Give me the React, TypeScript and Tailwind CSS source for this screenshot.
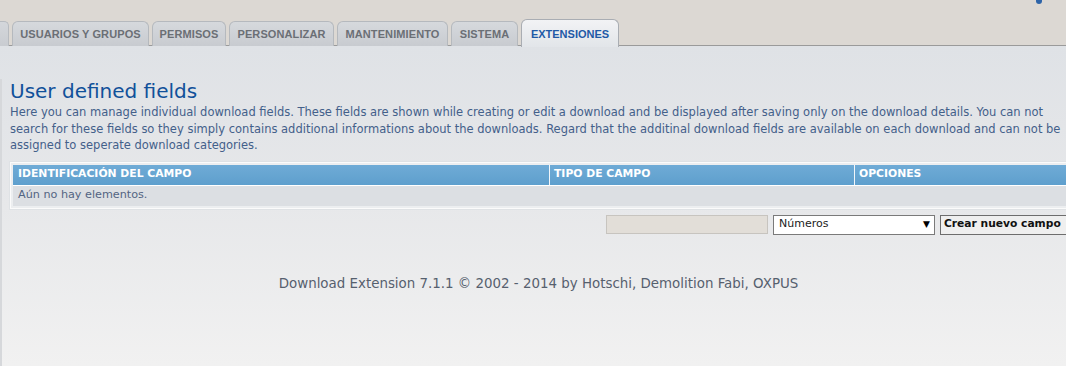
import React from "react";

const tabs = [
  { label: "USUARIOS Y GRUPOS", w: 137 },
  { label: "PERMISOS", w: 74 },
  { label: "PERSONALIZAR", w: 105 },
  { label: "MANTENIMIENTO", w: 111 },
  { label: "SISTEMA", w: 67 },
];

export default function App() {
  return (
    <div className="w-[1066px] h-[366px] overflow-hidden bg-[#f0f0f0]" style={{ fontFamily: '"DejaVu Sans", Verdana, sans-serif' }}>
      <div className="w-[1077px]">
        {/* header */}
        <div className="relative h-[46px] bg-[#dcd8d3] border-b border-[#9a9a9a] flex items-end">
          <div className="absolute right-[35px] top-0 w-[6px] h-[4px] bg-[#2e64a8] rounded-b-sm" />
          <div className="flex items-end gap-[3px] -mb-px" style={{ fontFamily: '"Liberation Sans", Arial, sans-serif' }}>
            <div className="w-[9px] h-[25px] bg-gradient-to-b from-[#d4d7db] to-[#c9ccd1] border border-l-0 border-b-0 border-[#b7bbc0] rounded-tr-[5px]" />
            {tabs.map((t) => (
              <div
                key={t.label}
                className="h-[25px] flex items-center justify-center bg-gradient-to-b from-[#d6d9dd] to-[#c8cbd0] border border-b-0 border-[#b5b9be] rounded-t-[6px] text-[11px] font-bold text-[#6b6f75] tracking-[0.1px] pt-[1px]"
                style={{ width: t.w }}
              >
                {t.label}
              </div>
            ))}
            <div className="h-[28px] w-[98px] flex items-center justify-center bg-gradient-to-b from-[#f2f3f5] to-[#e2e5e9] border border-b-0 border-[#a9adb3] rounded-t-[6px] text-[11px] font-bold text-[#1f5aa6] pt-[1px] relative top-px">
              EXTENSIONES
            </div>
          </div>
        </div>

        {/* content */}
        <div className="h-[320px] bg-gradient-to-b from-[#dfe2e6] via-[#e7e8ea] to-[#f1f1f1] pt-[33px]">
          <div className="border-l-2 border-[#d6d8db] pl-[8px] h-full">
            <h1 className="text-[20px] leading-[24px] text-[#11519a] font-normal">User defined fields</h1>
            <p className="text-[11.5px] leading-[16.5px] text-[#43608a] pr-[4px] mt-[1px]">
              Here you can manage individual download fields. These fields are shown while creating or edit a download and be displayed after saving only on the download details. You can not search for these fields so they simply contains additional informations about the downloads. Regard that the additinal download fields are available on each download and can not be assigned to seperate download categories.
            </p>

            <div className="mt-[8px] border border-[#fbfbfb] bg-[#eceef0] p-[2px] shadow-[0_0_0_1px_#dfe2e5]">
              <div className="flex h-[21px] text-white text-[10.8px] font-bold bg-gradient-to-b from-[#6fabd6] to-[#5e9fcd] border-b border-white">
                <div className="w-[537px] border-r border-[#f2f6fa] pl-[5px] flex items-center">IDENTIFICACIÓN DEL CAMPO</div>
                <div className="w-[305px] border-r border-[#f2f6fa] pl-[4px] flex items-center">TIPO DE CAMPO</div>
                <div className="flex-1 pl-[4px] flex items-center">OPCIONES</div>
              </div>
              <div className="h-[20px] bg-[#dcdfe3] flex items-center pl-[5px] text-[11.2px] text-[#536482]">Aún no hay elementos.</div>
            </div>

            <div className="flex items-center mt-[6px] ml-[596px] gap-[5px]">
              <div className="w-[162px] h-[19px] bg-[#e2ded8] border border-[#c7c4bf]" />
              <div className="w-[162px] h-[20px] bg-white border border-[#7a7a7a] flex items-center justify-between pl-[5px] pr-[4px] text-[11px] text-[#222]">
                <span>Números</span>
                <span className="text-[9px] text-black">▼</span>
              </div>
              <div className="h-[20px] pl-[3px] pr-[8px] bg-[#efefef] border border-[#6d6d6d] flex items-center text-[10.7px] font-bold text-[#111] whitespace-nowrap">Crear nuevo campo</div>
            </div>

            <div className="mt-[40px] text-center text-[13.4px] leading-[17px] text-[#56606e] pr-[10px]">
              Download Extension 7.1.1 © 2002 - 2014 by Hotschi, Demolition Fabi, OXPUS
            </div>
          </div>
        </div>
      </div>
    </div>
  );
}
